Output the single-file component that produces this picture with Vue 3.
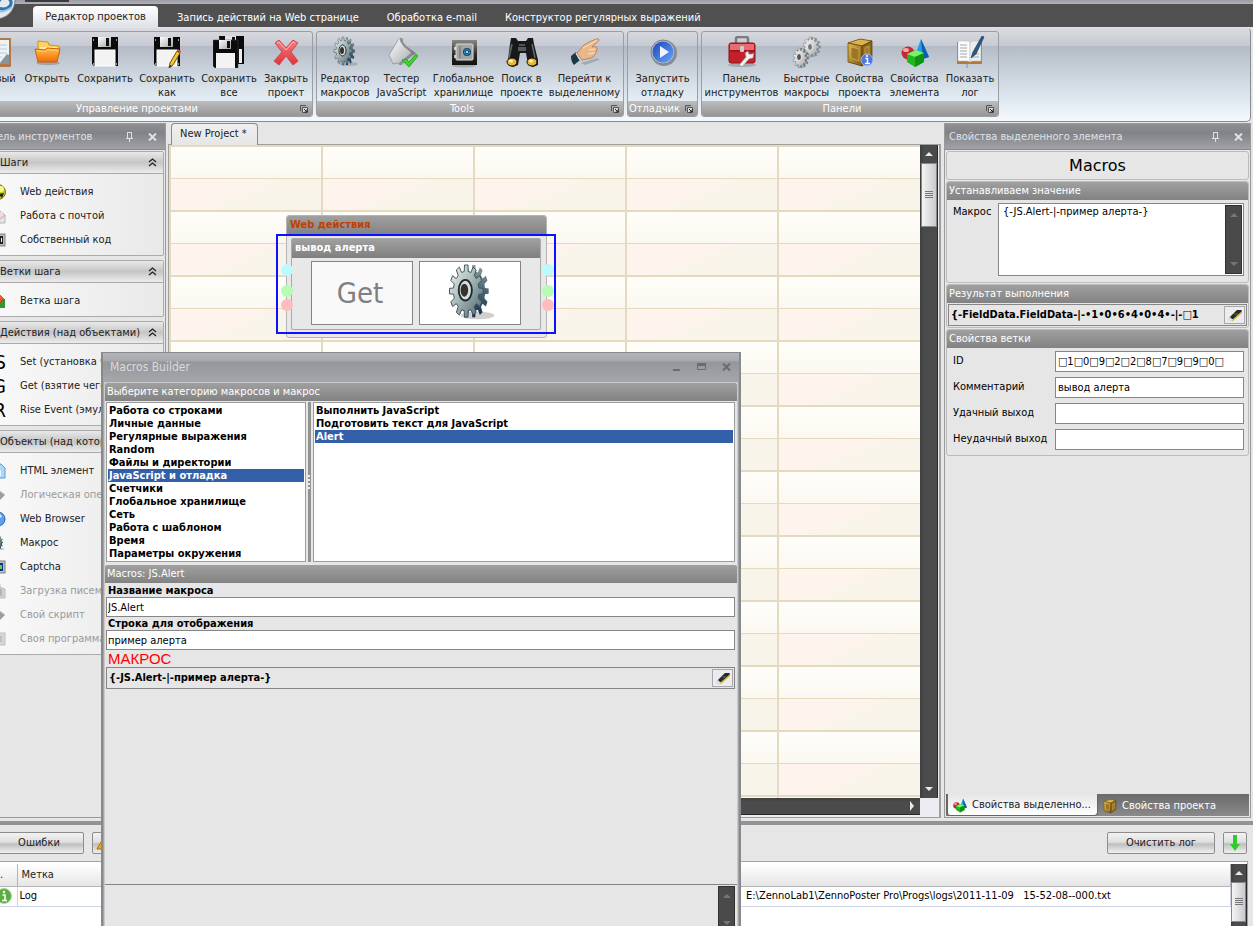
<script setup>
import { ref } from 'vue'

function gear(cx, cy, rx, ry, teeth, depth) {
  const pts = []
  const step = (Math.PI * 2) / teeth
  for (let i = 0; i < teeth; i++) {
    const a = i * step
    const ring = [[-0.3, 1 - depth], [-0.2, 1], [0.2, 1], [0.3, 1 - depth]]
    for (const [o, k] of ring) {
      const t = a + o * step
      pts.push((cx + Math.cos(t) * rx * k).toFixed(2) + ' ' + (cy + Math.sin(t) * ry * k).toFixed(2))
    }
  }
  return 'M' + pts.join('L') + 'Z'
}

const menu = ['Запись действий на Web странице', 'Обработка e-mail', 'Конструктор регулярных выражений']

const groups = [
  { id: 'projects', title: 'Управление проектами', items: [
    { icon: 'new', label: 'Новый' },
    { icon: 'open', label: 'Открыть' },
    { icon: 'save', label: 'Сохранить' },
    { icon: 'saveas', label: 'Сохранить\nкак' },
    { icon: 'saveall', label: 'Сохранить\nвсе' },
    { icon: 'close', label: 'Закрыть\nпроект' },
  ] },
  { id: 'tools', title: 'Tools', items: [
    { icon: 'gear', label: 'Редактор\nмакросов' },
    { icon: 'script', label: 'Тестер\nJavaScript' },
    { icon: 'safe', label: 'Глобальное\nхранилище' },
    { icon: 'find', label: 'Поиск в\nпроекте' },
    { icon: 'hand', label: 'Перейти к\nвыделенному' },
  ] },
  { id: 'debug', title: 'Отладчик', items: [{ icon: 'play', label: 'Запустить\nотладку' }] },
  { id: 'panels', title: 'Панели', items: [
    { icon: 'toolbox', label: 'Панель\nинструментов' },
    { icon: 'gears', label: 'Быстрые\nмакросы' },
    { icon: 'boxinfo', label: 'Свойства\nпроекта' },
    { icon: 'shapes', label: 'Свойства\nэлемента' },
    { icon: 'book', label: 'Показать\nлог' },
  ] },
]

const sections = [
  { title: 'Шаги', items: [
    { icon: 's-web', label: 'Web действия' },
    { icon: 's-mail', label: 'Работа с почтой' },
    { icon: 's-code', label: 'Собственный код' },
  ] },
  { title: 'Ветки шага', items: [{ icon: 's-branch', label: 'Ветка шага' }] },
  { title: 'Действия (над объектами)', items: [
    { letter: 'S', label: 'Set (установка чего-либо)' },
    { letter: 'G', label: 'Get (взятие чего-либо)' },
    { letter: 'R', label: 'Rise Event (эмуляция)' },
  ] },
  { title: 'Объекты (над которыми)', items: [
    { icon: 's-html', label: 'HTML элемент' },
    { icon: 's-logic', label: 'Логическая операция', off: true },
    { icon: 's-globe', label: 'Web Browser' },
    { icon: 'gear', label: 'Макрос' },
    { icon: 's-captcha', label: 'Captcha' },
    { icon: 's-load', label: 'Загрузка писем', off: true },
    { icon: 's-logic', label: 'Свой скрипт', off: true },
    { icon: 's-prog', label: 'Своя программа', off: true },
  ] },
]

const categories = ['Работа со строками', 'Личные данные', 'Регулярные выражения', 'Random', 'Файлы и директории', 'JavaScript и отладка', 'Счетчики', 'Глобальное хранилище', 'Сеть', 'Работа с шаблоном', 'Время', 'Параметры окружения']
const macros = ['Выполнить JavaScript', 'Подготовить текст для JavaScript', 'Alert']
const category = ref('JavaScript и отладка')
const macro = ref('Alert')

const macroText = ref('{-JS.Alert-|-пример алерта-}')
const resultText = ref('{-FieldData.FieldData-|-•1•0•6•4•0•4•-|-□1')
const builderText = ref('{-JS.Alert-|-пример алерта-}')
const macroName = ref('JS.Alert')
const displayText = ref('пример алерта')
const fields = ref([
  { id: 'f-id', label: 'ID', value: '□1□0□9□2□2□8□7□9□9□0□' },
  { id: 'f-comment', label: 'Комментарий', value: 'вывод алерта' },
  { id: 'f-ok', label: 'Удачный выход', value: '' },
  { id: 'f-fail', label: 'Неудачный выход', value: '' },
])
</script>

<template>
  <svg class="defs" aria-hidden="true">
    <defs>
      <linearGradient id="gSteel" x1="0" y1="0" x2="1" y2="1"><stop offset="0" stop-color="#f3f7f6" /><stop offset=".45" stop-color="#a9bab9" /><stop offset="1" stop-color="#4b626e" /></linearGradient>
      <linearGradient id="gDeep" x1="0" y1="0" x2="0" y2="1"><stop offset="0" stop-color="#8a9a98" /><stop offset="1" stop-color="#12324e" /></linearGradient>
      <linearGradient id="gOrange" x1="0" y1="0" x2="0" y2="1"><stop offset="0" stop-color="#ffc04a" /><stop offset="1" stop-color="#f06a05" /></linearGradient>
      <linearGradient id="gRed" x1="0" y1="0" x2="0" y2="1"><stop offset="0" stop-color="#f58080" /><stop offset="1" stop-color="#e0303a" /></linearGradient>
      <linearGradient id="gBlue" x1="0" y1="0" x2="1" y2="1"><stop offset="0" stop-color="#1746b8" /><stop offset="1" stop-color="#6aa4ff" /></linearGradient>
      <linearGradient id="gWood" x1="0" y1="0" x2="1" y2="1"><stop offset="0" stop-color="#e2b94c" /><stop offset="1" stop-color="#7d5712" /></linearGradient>
      <linearGradient id="gPaper" x1="0" y1="0" x2="1" y2="1"><stop offset="0" stop-color="#ffffff" /><stop offset="1" stop-color="#a0a4a8" /></linearGradient>
      <linearGradient id="gSafe" x1="0" y1="0" x2="0" y2="1"><stop offset="0" stop-color="#8c8782" /><stop offset=".6" stop-color="#2a2725" /><stop offset="1" stop-color="#14120f" /></linearGradient>
    </defs>
    <symbol id="new" viewBox="0 0 32 32"><rect x="3" y="2" width="25" height="29" rx="1" fill="#b07848" /><path d="M5 4h21v24H5z" fill="#eef3f6" /><path d="M7 9h17M7 13h17M7 17h17M7 21h12" stroke="#b6cbd6" /><path d="M16 28l8-10 2 1v9z" fill="#8a949a" /></symbol>
    <symbol id="open" viewBox="0 0 32 32"><ellipse cx="17" cy="27" rx="12" ry="2" fill="#777c86" opacity=".5" /><path d="M7 5l10 1 1 3 10 1v8H7z" fill="#fbd168" stroke="#d98f1c" /><path d="M9 11h17l-1 6H9z" fill="#ffe99a" /><path d="M4 13l10 1 2-2 13 1-3 13H7z" fill="url(#gOrange)" stroke="#cf5c06" /><path d="M5.500 14.500l9 1 2-2 11 1" fill="none" stroke="#ffd27a" /></symbol>
    <symbol id="save" viewBox="0 0 32 32"><path d="M3 1h26v29H5l-2-2z" fill="#0b0b0b" /><rect x="9" y="1" width="13" height="10" fill="url(#gPaper)" /><rect x="17" y="2" width="3" height="8" fill="#111" /><rect x="6" y="14" width="20" height="16" fill="#f3f3f3" stroke="#fff" /><path d="M4.500 3v2M27.500 3v2M4.500 27v2M27.500 27v2" stroke="#999" /></symbol>
    <symbol id="saveas" viewBox="0 0 32 32"><use href="#save" width="32" height="32" /><path d="M26 15l3 2-7 12-4 3 1-5z" fill="#f0c929" stroke="#6d5410" /><path d="M26 15l3 2 1-2-3-2z" fill="#e33" /><path d="M18 32l1-3 2 1z" fill="#222" /></symbol>
    <symbol id="saveall" viewBox="0 0 32 32"><path d="M6 0h25v28H8z" fill="#0b0b0b" /><rect x="12" y="0" width="11" height="7" fill="#e4e4e4" /><rect x="19" y="1" width="3" height="5" fill="#111" /><rect x="26" y="13" width="3" height="14" fill="#eee" /><path d="M0 4h25v28H2l-2-2z" fill="#0b0b0b" stroke="#444" stroke-width=".5" /><rect x="6" y="4" width="12" height="9" fill="url(#gPaper)" /><rect x="14" y="5" width="3" height="7" fill="#111" /><rect x="3" y="17" width="19" height="15" fill="#f3f3f3" /></symbol>
    <symbol id="close" viewBox="0 0 32 32"><path d="M5 7l4-3 7 8 7-8 5 3-7 9 7 9-5 4-7-9-7 9-5-4 8-9z" fill="url(#gRed)" stroke="#d2484d" stroke-linejoin="round" /><path d="M7 7l2-1 7 8 7-8 2 1" fill="none" stroke="#ffb9b9" /></symbol>
    <symbol id="gear" viewBox="0 0 32 32"><ellipse cx="20" cy="28" rx="9" ry="2" fill="#777" opacity=".35" /><path :d="gear(18, 15, 8, 14, 12, 0.24)" fill="url(#gDeep)" /><path :d="gear(14, 15, 9, 14, 12, 0.24)" fill="url(#gSteel)" stroke="#3d5058" stroke-width=".5" /><ellipse cx="13.500" cy="14.500" rx="3.500" ry="5.500" fill="#d5e0dc" stroke="#1b2a2f" stroke-width="1" /><ellipse cx="13" cy="14.500" rx="2" ry="3.500" fill="#3a302b" /></symbol>
    <symbol id="script" viewBox="0 0 32 32"><path d="M3 19l9-15 2-2 3 1-1 3 2 3 11 8-14 12-4-2-4 1z" fill="url(#gPaper)" stroke="#888c90" stroke-width=".7" /><path d="M14 2q3 0 3 4l3 4 10 7-2 2-10-8-4-6z" fill="#777b7e" opacity=".75" /><path d="M13 27l13-11 2 2-14 11z" fill="#5c6064" opacity=".5" /><path d="M16 24l4-1 3 3 7-8 2 2-9 11z" fill="#3ed32b" stroke="#159112" stroke-width=".7" /></symbol>
    <symbol id="safe" viewBox="0 0 32 32"><ellipse cx="16" cy="30" rx="12" ry="1.500" fill="#777" opacity=".4" /><rect x="4" y="4" width="25" height="25" fill="url(#gSafe)" /><rect x="8" y="8" width="17" height="16" rx="1" fill="#a3a5a5" stroke="#ddd" /><path d="M12 10v12" stroke="#666" /><path d="M7 11v3M7 19v3" stroke="#eee" stroke-width="1.500" /><circle cx="19" cy="16" r="4" fill="#12486e" /><circle cx="19" cy="16" r="2.500" fill="none" stroke="#4ec2f0" stroke-dasharray="2 1" /><circle cx="19" cy="16" r="1" fill="#fff" /></symbol>
    <symbol id="find" viewBox="0 0 32 32"><path d="M5 2h5l2 3h8l2-3h5l1 6 4 16v5l-5 2-5-2-2-12h-6l-2 12-5 2-5-2v-5L4 8z" fill="#17191b" /><path d="M6 8l-3 14M26 8l3 14M13 9h6" stroke="#62686c" stroke-width="1.500" /><path d="M13 11v4M15 11v4M17 11v4M19 11v4" stroke="#bbb" stroke-width=".8" /><ellipse cx="6" cy="26" rx="5" ry="4" fill="#e9b637" stroke="#111" /><ellipse cx="26" cy="26" rx="5" ry="4" fill="#e9b637" stroke="#111" /><ellipse cx="5" cy="25" rx="2" ry="1.500" fill="#fff1a2" /><ellipse cx="25" cy="25" rx="2" ry="1.500" fill="#fff1a2" /></symbol>
    <symbol id="hand" viewBox="0 0 32 32"><path d="M12 27l17-5 1 2-14 5z" fill="#777" opacity=".4" /><path d="M8 17l7-8 5-3 7-3q3-1 3 1 0 1-5 5l-2 2q5-1 5 1 1 2-1 3 1 2-1 3 0 3-4 4l-9 2z" fill="#eab78c" stroke="#ad6d3e" stroke-width=".7" /><path d="M14 12l9-5 5-3M20 14l6-1M19 18l7-1" stroke="#fbe2c4" fill="none" /><path d="M2 20l5-4 4 8-6 5q-3-3-3-9z" fill="#1f3645" /><path d="M7 17l4 7" stroke="#d9e1e6" stroke-width="1.500" /></symbol>
    <symbol id="play" viewBox="0 0 32 32"><circle cx="17" cy="17" r="13" fill="#888e96" /><circle cx="16" cy="16" r="12" fill="#b5bac1" stroke="#7c828b" /><circle cx="16" cy="16" r="10.500" fill="url(#gBlue)" /><path d="M13 10l9 6-9 6z" fill="#eef4ff" /></symbol>
    <symbol id="toolbox" viewBox="0 0 32 32"><ellipse cx="16" cy="29" rx="14" ry="2" fill="#777" opacity=".4" /><path d="M10 8V3q0-2 2-2h8q2 0 2 2v5" fill="none" stroke="#777d80" stroke-width="2.500" /><rect x="3" y="7" width="26" height="20" rx="2" fill="#c3202b" stroke="#8d1119" /><path d="M4 8h24v6H4z" fill="#e96a70" /><path d="M4 15h24" stroke="#7d0f16" /><rect x="14" y="10" width="4" height="6" rx="1" fill="#ccc" /><path d="M13 29l7-8-1-4 3-2 1 3h3l2-1-1 5-4 1-7 8z" fill="#eef0f2" stroke="#888" stroke-width=".7" /></symbol>
    <symbol id="gears" viewBox="0 0 32 32"><path :d="gear(22, 11, 8, 10, 11, 0.25)" fill="#87918f" /><path :d="gear(20, 11, 8, 10, 11, 0.25)" fill="url(#gPaper)" stroke="#717c7c" stroke-width=".5" /><ellipse cx="19" cy="11" rx="2.500" ry="3.500" fill="#777" stroke="#eee" /><path :d="gear(11, 22, 7, 10, 11, 0.25)" fill="#6f7b7c" /><path :d="gear(9, 22, 7, 10, 11, 0.25)" fill="url(#gPaper)" stroke="#717c7c" stroke-width=".5" /><ellipse cx="8" cy="21" rx="2.500" ry="3.500" fill="#5c5350" stroke="#eee" /></symbol>
    <symbol id="box" viewBox="0 0 32 32"><path d="M4 7l12-4 12 2v18l-10 7-14-4z" fill="#76561a" /><path d="M4 7l12-4 12 2-10 5z" fill="#dcb44b" stroke="#5e4310" stroke-width=".7" /><path d="M4 7l14 3v20L4 26z" fill="url(#gWood)" stroke="#5e4310" stroke-width=".7" /><path d="M18 10l10-5v18l-10 7z" fill="#8d671b" stroke="#4e370b" stroke-width=".7" /><path d="M7 11l8 2v12l-8-3zM21 12l4-2v11l-4 3z" fill="#9c7728" stroke="#e0bd5c" stroke-width=".6" /></symbol>
    <symbol id="boxinfo" viewBox="0 0 32 32"><use href="#box" width="32" height="32" /><circle cx="23" cy="24" r="6" fill="#4e78da" stroke="#b9cbff" stroke-width=".8" /><path d="M21.500 22.500h2V27M21 27.500h5" stroke="#fff" stroke-width="1.400" fill="none" /><circle cx="23" cy="20" r="1" fill="#fff" /></symbol>
    <symbol id="shapes" viewBox="0 0 32 32"><path d="M22 3l8 18-10 3-4-4z" fill="#249be6" /><path d="M22 3l8 18-6 2z" fill="#0a5fae" /><circle cx="9" cy="17" r="6.500" fill="#c62832" /><ellipse cx="7" cy="14" rx="3" ry="2" fill="#f5a3a5" /><path d="M8 18l9-4 8 3v9l-9 5-8-5z" fill="#22b51f" /><path d="M8 18l9-4 8 3-9 4z" fill="#7bf06c" /><path d="M16 21l9-4v9l-9 5z" fill="#0f9412" /></symbol>
    <symbol id="book" viewBox="0 0 32 32"><path d="M3 6h25v22H3z" fill="#b7783c" /><path d="M4 5h9q3 0 3 2v19q-1-1-3-1H4z" fill="#fafbfb" stroke="#bbb" stroke-width=".5" /><path d="M16 7q1-2 3-2h8v20h-8q-2 0-3 1z" fill="#e9eef0" stroke="#bbb" stroke-width=".5" /><path d="M6 9h7M6 12h7M6 15h7M6 18h7M6 21h7M18 18h7M18 21h7" stroke="#a5a9ab" /><path d="M28 0l2 1-8 17-5 4 2-6z" fill="#2a5c86" stroke="#16344f" stroke-width=".6" /><path d="M15 27q-4 2-1 5" fill="none" stroke="#6a94ad" /></symbol>
    <symbol id="s-web" viewBox="0 0 16 16"><circle cx="8" cy="8" r="7.500" fill="#c6cf1c" stroke="#6c7312" /><path d="M8 10l6-1-2 5z" fill="#222" /><circle cx="11" cy="5" r="3" fill="#f4f78a" /></symbol>
    <symbol id="s-mail" viewBox="0 0 16 16"><path d="M2 7l7-5 6 5v8H2z" fill="#e5e5e7" stroke="#b5b5b8" /><path d="M4 4h9v5l-4 3-5-3z" fill="#f5d9d5" /><path d="M2 8l7 4 6-5" fill="none" stroke="#aaa" /></symbol>
    <symbol id="s-code" viewBox="0 0 16 16"><rect x="1" y="2" width="14" height="12" fill="#b9bec2" stroke="#7b8288" /><rect x="3" y="4" width="10" height="8" fill="#1e2328" /><path d="M9 5v6M11.500 6v4" stroke="#fff" /></symbol>
    <symbol id="s-branch" viewBox="0 0 16 16"><path d="M2 6h13v9H2z" fill="#2f9a35" /><path d="M9 1l6 6h-3l-4 6-3-3 3-3H4z" fill="#f05b26" stroke="#b23310" stroke-width=".6" /></symbol>
    <symbol id="s-html" viewBox="0 0 16 16"><path d="M3 1h8l4 4v10H3z" fill="#a9d8fb" stroke="#5ba0d4" /><path d="M5 7h6v6H5z" fill="#eef8ff" /></symbol>
    <symbol id="s-logic" viewBox="0 0 16 16"><path d="M2 4h8l5 4-5 5H2z" fill="#777" stroke="#b9b9b9" /></symbol>
    <symbol id="s-globe" viewBox="0 0 16 16"><circle cx="8" cy="8" r="7" fill="#5da1ea" stroke="#2b62b0" /><path d="M3 5q5-5 9 0-2 3-5 2t-4-2z" fill="#d7ecff" /></symbol>
    <symbol id="s-captcha" viewBox="0 0 16 16"><rect x="1" y="2" width="14" height="12" fill="#b6c4d0" stroke="#78838c" /><rect x="3" y="4" width="10" height="8" fill="#1c2c80" /><rect x="9" y="6" width="3" height="4" fill="#63d14a" /></symbol>
    <symbol id="s-load" viewBox="0 0 16 16"><path d="M3 1h7v3l5 2v9H3z" fill="#c2c2c2" stroke="#a9a9a9" /><path d="M10 6h2v7h-2z" fill="#999" /></symbol>
    <symbol id="s-prog" viewBox="0 0 16 16"><rect x="1" y="2" width="14" height="12" fill="#c9c9c9" stroke="#aaa" /><path d="M5 5v6M8 5v6M11 5v6" stroke="#888" /></symbol>
    <symbol id="pin" viewBox="0 0 9 10"><path d="M2 0.500h5M2.500 0v6M6.500 0v6M1 6.500h7M4.500 6v4" fill="none" stroke="currentColor" /></symbol>
    <symbol id="cross" viewBox="0 0 9 8"><path d="M1 0.500l7 7M8 0.500l-7 7" stroke="currentColor" stroke-width="2" /></symbol>
    <symbol id="up" viewBox="0 0 10 10"><path d="M1 7l4-4 4 4z" fill="currentColor" /></symbol>
    <symbol id="down" viewBox="0 0 10 10"><path d="M1 3l4 4 4-4z" fill="currentColor" /></symbol>
    <symbol id="right" viewBox="0 0 10 10"><path d="M3 0l4 5-4 5z" fill="currentColor" /></symbol>
    <symbol id="chev" viewBox="0 0 9 9"><path d="M1 4l3.500-3L8 4M1 8l3.500-3L8 8" fill="none" stroke="currentColor" stroke-width="1.300" /></symbol>
    <symbol id="launch" viewBox="0 0 8 8"><path d="M0.500 6V0.500H6" fill="none" stroke="#555" /><path d="M2.500 7.500V2.500h5v5z" fill="#ddd" stroke="#555" /><path d="M4 4l3 3M7 4.500V7H4.500" stroke="#222" fill="none" /></symbol>
    <symbol id="marker" viewBox="0 0 16 13"><path d="M1 10l9-9h5v3l-9 8H2z" fill="#d9b92c" /><path d="M2 9l8-8h4l1 1-9 8H3z" fill="#1f2b30" /><path d="M1 9l2-1 3 3-2 1H1z" fill="#d8e4d8" /><path d="M7 5l4 0" stroke="#5a6a66" /></symbol>
  </svg>

  <div class="shell">
    <div class="titlebar"></div>
    <header class="tabs">
      <svg class="orb" viewBox="0 0 40 46" aria-hidden="true"><circle cx="20" cy="25" r="19" fill="#e6e9eb" stroke="#777b80" /><path d="M18 31q10 6 16 0 3-5-2-8-6-2-9 3" fill="none" stroke="#2b75b8" stroke-width="3" /><path d="M16 34q9 6 20-2" fill="none" stroke="#8ec3ea" stroke-width="2" /></svg>
      <button class="tab active">Редактор проектов</button>
      <button v-for="m in menu" :key="m" class="tab">{{ m }}</button>
    </header>

    <section class="ribbon">
      <div v-for="g in groups" :key="g.id" class="group">
        <div class="buttons" :class="g.id">
          <button v-for="b in g.items" :key="b.icon" class="big"><svg class="i32"><use :href="'#' + b.icon" /></svg><span>{{ b.label }}</span></button>
        </div>
        <div class="caption"><span>{{ g.title }}</span><button class="launch" :aria-label="g.title"><svg class="i8"><use href="#launch" /></svg></button></div>
      </div>
    </section>

    <main class="work">
      <aside class="left panel">
        <div class="phead"><span>Панель инструментов</span><button aria-label="Закрепить"><svg class="ipin"><use href="#pin" /></svg></button><button aria-label="Закрыть"><svg class="icross"><use href="#cross" /></svg></button></div>
        <section v-for="s in sections" :key="s.title" class="acc">
          <h3>{{ s.title }}<svg class="i9"><use href="#chev" /></svg></h3>
          <ul>
            <li v-for="it in s.items" :key="it.label" :class="{ off: it.off }">
              <span v-if="it.letter" class="letter">{{ it.letter }}</span>
              <svg v-else class="i16"><use :href="'#' + it.icon" /></svg>
              <span>{{ it.label }}</span>
            </li>
          </ul>
        </section>
      </aside>

      <section class="doc">
        <div class="doctabs"><button class="doctab">New Project *</button></div>
        <div class="frame">
          <div class="canvas">
            <div class="node">
              <div class="nhead">Web действия</div>
              <div class="step">
                <div class="shead">вывод алерта</div>
                <div class="cells">
                  <div class="cell get">Get</div>
                  <div class="cell pic"><svg class="i64"><use href="#gear" /></svg></div>
                </div>
              </div>
              <div class="selection">
                <i class="port l cyan"></i><i class="port l green"></i><i class="port l pink"></i>
                <i class="port r cyan"></i><i class="port r green"></i><i class="port r pink"></i>
              </div>
            </div>
          </div>
          <div class="vbar"><svg class="i10"><use href="#up" /></svg><div class="thumb"><i></i></div><svg class="i10 end"><use href="#down" /></svg></div>
          <div class="hbar"><svg class="i10"><use href="#right" /></svg></div>
        </div>
      </section>

      <aside class="right panel">
        <div class="phead"><span>Свойства выделенного элемента</span><button aria-label="Закрепить"><svg class="ipin"><use href="#pin" /></svg></button><button aria-label="Закрыть"><svg class="icross"><use href="#cross" /></svg></button></div>
        <h2>Macros</h2>
        <section class="box">
          <h3>Устанавливаем значение</h3>
          <div class="macro">
            <label for="macro">Макрос</label>
            <div class="area"><textarea id="macro" v-model="macroText"></textarea><div class="mini"><svg class="i10"><use href="#up" /></svg><svg class="i10"><use href="#down" /></svg></div></div>
          </div>
        </section>
        <section class="box">
          <h3 id="res">Результат выполнения</h3>
          <div class="pick"><input v-model="resultText" aria-labelledby="res" /><button aria-label="Изменить"><svg class="imark"><use href="#marker" /></svg></button></div>
        </section>
        <section class="box">
          <h3>Свойства ветки</h3>
          <div class="fields">
            <template v-for="f in fields" :key="f.id"><label :for="f.id">{{ f.label }}</label><input :id="f.id" v-model="f.value" /></template>
          </div>
        </section>
        <nav class="ptabs">
          <button class="ptab on"><svg class="i16"><use href="#shapes" /></svg>Свойства выделенно...</button>
          <button class="ptab"><svg class="i16"><use href="#box" /></svg>Свойства проекта</button>
        </nav>
      </aside>
    </main>

    <section class="log">
      <div class="logbar">
        <button class="btn err">Ошибки</button>
        <button class="btn sq" aria-label="Предупреждения"><svg class="i16" viewBox="0 0 16 16"><path d="M8 2l7 12H1z" fill="#f7a81c" stroke="#b36c07" /><path d="M8 6v4M8 11v2" stroke="#222" /></svg></button>
        <span class="grow"></span>
        <button class="btn clear">Очистить лог</button>
        <button class="btn sq" aria-label="Прокрутить вниз"><svg class="i16" viewBox="0 0 16 16"><path d="M6 0h4v9h3l-5 7-5-7h3z" fill="#2fcb2c" /></svg></button>
      </div>
      <div class="grid">
        <table>
          <colgroup><col class="c1" /><col class="c2" /><col /></colgroup>
          <thead><tr><th class="dot">.</th><th>Метка</th><th></th></tr></thead>
          <tbody><tr><td class="ico"><svg class="i16" viewBox="0 0 16 16"><circle cx="8" cy="8" r="7.500" fill="#59b040" stroke="#a9d79a" /><path d="M6.500 7H9v5M6 12.500h5" stroke="#fff" stroke-width="1.500" fill="none" /><circle cx="8" cy="4" r="1.200" fill="#fff" /></svg></td><td>Log</td><td class="path">E:\ZennoLab1\ZennoPoster Pro\Progs\logs\2011-11-09&nbsp;&nbsp; 15-52-08--000.txt</td></tr></tbody>
        </table>
        <div class="vbar"><svg class="i10"><use href="#up" /></svg><div class="thumb tall"><i></i></div></div>
      </div>
    </section>

    <div class="dialog" role="dialog" aria-labelledby="dlg">
      <div class="dhead">
        <span id="dlg">Macros Builder</span>
        <button aria-label="Свернуть"><svg class="iwin" viewBox="0 0 9 8"><path d="M1 6h7v2H1z" fill="currentColor" /></svg></button>
        <button aria-label="Развернуть"><svg class="iwin" viewBox="0 0 9 8"><path d="M0.500 0.500h8v6h-8z" fill="none" stroke="currentColor" /><path d="M0 0h9v3H0z" fill="currentColor" /></svg></button>
        <button aria-label="Закрыть"><svg class="iwin"><use href="#cross" /></svg></button>
      </div>
      <div class="dbody">
        <h3>Выберите категорию макросов и макрос</h3>
        <div class="lists">
          <ul class="list cats" role="listbox" aria-label="Категории"><li v-for="c in categories" :key="c" role="option" :aria-selected="c === category" @click="category = c">{{ c }}</li></ul>
          <div class="split"><i></i></div>
          <ul class="list" role="listbox" aria-label="Макросы"><li v-for="m in macros" :key="m" role="option" :aria-selected="m === macro" @click="macro = m">{{ m }}</li></ul>
        </div>
        <h3>Macros: JS.Alert</h3>
        <div class="form">
          <label for="mname">Название макроса</label>
          <input id="mname" v-model="macroName" />
          <label for="mtext">Строка для отображения</label>
          <input id="mtext" v-model="displayText" />
          <label class="red" for="mres">МАКРОС</label>
          <div class="pick"><input id="mres" v-model="builderText" /><button aria-label="Изменить"><svg class="imark"><use href="#marker" /></svg></button></div>
        </div>
        <div class="dfoot"><div class="mini"><svg class="i10"><use href="#up" /></svg><svg class="i10"><use href="#down" /></svg></div></div>
      </div>
    </div>
  </div>
</template>

<style>
html, body { margin: 0; background: #e6e6e6; overflow: hidden; }
</style>

<style scoped>
.defs { position: absolute; width: 0; height: 0; }
.shell { position: relative; display: flex; flex-direction: column; height: 100vh; margin-left: -24px; overflow: hidden; background: #e6e6e6; font: 11px/14px "DejaVu Sans Condensed", "DejaVu Sans", "Noto Sans", sans-serif; color: #222; }
.shell * { box-sizing: border-box; }
button { border: 0; padding: 0; margin: 0; background: none; font: inherit; color: inherit; white-space: nowrap; }
input, textarea { font: inherit; color: #000; border: 1px solid #868686; background: #fff; border-radius: 0; margin: 0; outline: 0; min-width: 0; }
h2, h3, ul { margin: 0; padding: 0; font: inherit; list-style: none; }
svg { display: block; flex: none; }
.i32 { width: 32px; height: 32px; }
.i16 { width: 16px; height: 16px; }
.i10 { width: 10px; height: 10px; }
.i9 { width: 9px; height: 9px; }
.i8 { width: 8px; height: 8px; }
.i64 { width: 62px; height: 60px; }
.ipin { width: 9px; height: 10px; }
.icross, .iwin { width: 9px; height: 8px; }
.imark { width: 16px; height: 13px; }

.titlebar { flex: none; height: 4px; background: linear-gradient(#3c3c3e, #3c3c3e) 49px 0 / 44px 2px no-repeat, linear-gradient(#9b9ca6, #b2b2bb); }
.tabs { position: relative; flex: none; display: flex; align-items: flex-end; height: 23px; padding-left: 57px; background: #505050; color: #fff; }
.orb { position: absolute; left: 0; top: -29px; width: 40px; height: 46px; }
.tab { height: 20px; padding: 1px 14px 0; }
.tab.active { height: 21px; width: 125px; padding: 0; margin-right: 5px; border-radius: 4px 4px 0 0; background: linear-gradient(#fff, #dfe2e6); color: #222; }

.ribbon { flex: none; display: flex; gap: 3px; height: 95px; padding: 3px 2px 4px 1px; margin-right: 2px; border: 1px solid #898c90; border-top-color: #dfe3e8; border-left: 0; border-radius: 0 5px 5px 0; background: linear-gradient(#dadce1, #c4c8d0 18px, #b4bbc6 18px, #dce5ed 68px, #f4f9fd); }
.group { display: flex; flex-direction: column; border: 1px solid #9a9da3; border-radius: 3px; overflow: hidden; background: linear-gradient(#d6d8de, #c6cad2 14px, #b4bbc6 14px, #e6eff6 70px); }
.buttons { flex: 1; display: grid; }
.projects { grid-template-columns: 42px 54px 62px 62px 62px 52px; }
.tools { grid-template-columns: 56px 57px 67px 49px 77px; }
.debug { grid-template-columns: 69px; }
.panels { grid-template-columns: 79px 51px 55px 55px 56px; }
.big { display: flex; flex-direction: column; align-items: center; gap: 4px; padding-top: 4px; min-width: 0; }
.big span { white-space: pre; text-align: center; }
.caption { display: flex; align-items: center; height: 15px; background: linear-gradient(#bcbcbc, #969696); color: #fff; }
.caption span { flex: 1; text-align: center; }
.launch { padding: 0 4px; }

.work { flex: 1; display: flex; gap: 2px; min-height: 0; padding: 1px 2px 3px 0; }
.panel { display: flex; flex-direction: column; flex: none; border: 1px solid #9a9a9c; background: #e6e6e6; }
.phead { display: flex; align-items: center; flex: none; height: 26px; padding: 1px 0 0 4px; background: linear-gradient(#8d8f93, #818387 9px, #a0a2a5); color: #dfe1e8; border-bottom: 1px solid #87898c; }
.phead span { flex: 1; }
.phead button { width: 23px; display: flex; justify-content: center; }
.left { width: 190px; }
.left .phead { padding-left: 0; }
.left .phead button:last-child { margin-right: 1px; }
.acc { margin: 1px 1px 3px 0; border: 1px solid #ababab; border-radius: 2px; background: linear-gradient(90deg, #fafafa, #e9e9e9); }
.acc h3 { display: flex; align-items: center; justify-content: space-between; height: 22px; padding: 0 6px 0 22px; border-bottom: 1px solid #a9a9a9; background: linear-gradient(#e9e9e9, #c6c6c6 50%, #ececec); white-space: nowrap; }
.acc ul { padding: 6px 0 3px 12px; }
.acc li { display: flex; align-items: center; gap: 14px; height: 24px; white-space: nowrap; }
.off { color: #9a9a9a; }
.off svg { opacity: .7; }
.letter { width: 16px; text-align: right; font-size: 20px; color: #000; }

.doc { flex: 1; display: flex; flex-direction: column; min-width: 0; }
.doctabs { flex: none; display: flex; height: 21px; padding-left: 3px; }
.doctab { width: 87px; height: 22px; position: relative; border: 1px solid #8b8b8b; border-bottom: 0; border-radius: 4px 4px 0 0; background: linear-gradient(#efefef, #e6e6e6); text-align: left; padding: 0 0 2px 8px; }
.frame { flex: 1; display: grid; grid-template-columns: 1fr 18px; grid-template-rows: 1fr 17px; padding: 0 1px 2px 0; border: 1px solid #9f9f9f; border-right-width: 2px; background: #ececf2; min-height: 0; }
.canvas { position: relative; overflow: hidden; background:
  linear-gradient(90deg, #e3dabf 2px, transparent 2px) 0 0 / 152px 65px,
  linear-gradient(#e3dabf 2px, transparent 2px, transparent 33px, #e3dabf 33px, #e3dabf 34px, transparent 34px) 0 0 / 152px 65px,
  linear-gradient(#fffefa, #fbf8f1 33px, transparent 33px) 0 0 / 152px 65px,
  linear-gradient(155deg, #fef4ed 55%, #f8f4e9 68%) 0 0 / 152px 65px;
}
.vbar { display: flex; flex-direction: column; align-items: center; padding: 4px 0; background: linear-gradient(90deg, #3c3e41, #4b4b4b 4px); border-right: 1px solid #26282c; color: #e9e9e9; }
.vbar .end { margin-top: auto; }
.thumb { display: flex; align-items: center; justify-content: center; width: 16px; height: 64px; margin-top: 4px; background: linear-gradient(90deg, #f4f4f4, #c9cacd); border: 1px solid #888; }
.thumb i { width: 8px; height: 8px; background: repeating-linear-gradient(#777 0 1px, transparent 1px 2px); }
.grid .vbar { width: 16px; }
.thumb.tall { width: 15px; height: 60px; }
.hbar { display: flex; align-items: center; justify-content: flex-end; padding-right: 3px; background: linear-gradient(#3c3e41, #4b4b4b 4px); border-bottom: 1px solid #26282c; color: #e9e9e9; }

.node { position: absolute; left: 117px; top: 70px; width: 261px; height: 123px; border: 1px solid #b5b5b8; border-radius: 3px; background: #e8e8e9; }
.nhead { height: 19px; padding: 2px 3px; border-radius: 2px 2px 0 0; background: linear-gradient(#a0a0a0, #828282); color: #c04000; font-weight: bold; }
.step { margin: 3px 5px 0 4px; height: 92px; border: 1px solid #aaa; border-radius: 2px; background: #e8e8e9; }
.shead { height: 19px; padding: 2px 3px; background: linear-gradient(#a0a0a0, #7f7f7f); color: #fff; font-weight: bold; }
.cells { display: flex; gap: 6px; justify-content: center; margin-top: 3px; }
.cell { display: flex; align-items: center; justify-content: center; width: 102px; height: 64px; border: 1px solid #858585; background: #fff; }
.get { padding-right: 4px; background: #f9f9f9; color: #808080; font-size: 29px; }
.selection { position: absolute; left: -11px; top: 18px; width: 280px; height: 100px; border: 2px solid #0b12ff; }
.port { position: absolute; width: 12px; height: 12px; border-radius: 6px; }
.port.l { left: 3px; }
.port.r { right: 0; }
.cyan { top: 28px; background: #bdfaff; }
.green { top: 49px; background: #b7fbb7; }
.pink { top: 63px; background: #ffbcbc; }

.right { width: 307px; margin-left: 1px; }
.right h2 { flex: none; margin: 1px 1px; height: 29px; border: 1px solid #bbb; border-radius: 3px; text-align: center; font: 16px/28px "DejaVu Sans", sans-serif; color: #000; }
.box { margin: 0 1px 1px; border: 1px solid #bbb; border-radius: 3px; }
.box h3, .dbody h3 { height: 18px; padding: 2px; border-radius: 2px 2px 0 0; background: linear-gradient(#a0a0a0, #828282); color: #fff; }
.macro { display: flex; height: 82px; padding: 3px 4px 6px 6px; color: #000; }
.macro label { width: 45px; padding-top: 2px; }
.area { flex: 1; display: flex; padding: 1px; border: 1px solid #868686; background: #fff; }
.area textarea { flex: 1; padding: 0 3px; border: 0; resize: none; overflow: hidden; white-space: pre; }
.mini { display: flex; flex-direction: column; justify-content: space-between; align-items: center; width: 17px; padding: 4px 0; background: #4a4a4a; border: 1px solid #2f3134; color: #757575; }
.pick { display: flex; height: 22px; margin: 1px; padding: 1px; border: 1px solid #868686; }
.pick input { flex: 1; border: 0; padding: 0 1px; background: transparent; font-weight: bold; }
.pick button { width: 21px; border: 1px solid #a6a8ae; background: #ebebf0; display: flex; align-items: center; justify-content: center; }
.fields { display: grid; grid-template-columns: 102px 1fr; row-gap: 5px; padding: 3px 4px 5px 6px; color: #000; }
.fields label { line-height: 20px; }
.fields input { height: 21px; padding: 0 2px; }
.ptabs { display: flex; height: 22px; margin: auto 1px 1px 1px; background: linear-gradient(#6b6b6b, #8a8a8a); }
.ptab { display: flex; align-items: center; gap: 4px; padding: 1px 4px 0; color: #fff; }
.ptab.on { width: 152px; background: linear-gradient(#e6e6e6, #fff); color: #222; border: 1px solid #666; border-top: 0; border-left-width: 2px; border-radius: 0 0 4px 4px; }

.log { flex: none; height: 105px; border-top: 4px solid #919492; }
.logbar { display: flex; align-items: center; gap: 8px; height: 36px; padding: 0 6px 0 14px; }
.grow { flex: 1; }
.btn { height: 22px; border: 1px solid #8d8d8d; border-radius: 2px; background: linear-gradient(#f2f2f2, #e0e0e0 45%, #bfbfbf 55%, #f0f0f0); }
.err { width: 94px; padding-left: 4px; }
.clear { width: 108px; }
.sq { width: 24px; display: flex; align-items: center; justify-content: center; }
.grid { display: flex; height: 65px; margin-right: 5px; padding-top: 2px; border: 1px solid #a2a2a2; border-left: 0; border-bottom: 0; background: #fff; }
.grid table { flex: 1; align-self: flex-start; table-layout: fixed; border-collapse: collapse; }
.c1 { width: 41px; }
.c2 { width: 727px; }
th { height: 22px; padding: 0 4px; border-bottom: 1px solid #b5b5b5; border-right: 1px solid #b5b5b5; background: linear-gradient(#fff, #e5e5e5); font-weight: normal; text-align: left; }
td { height: 20px; padding: 0 2px; border-bottom: 1px solid #ccd6e6; border-right: 1px solid #ccd6e6; color: #000; }
th:nth-child(2), td:nth-child(2) { border-right: 0; }
.dot { padding-left: 24px; }
.ico { padding-left: 20px; }
.path { white-space: nowrap; }

.dialog { position: absolute; left: 125px; top: 352px; bottom: -10px; width: 640px; display: flex; flex-direction: column; border: 1px solid #88898c; border-width: 1px 2px; background: #a3a5a8; }
.dhead { flex: none; display: flex; align-items: center; height: 29px; padding: 0 5px 2px 7px; background: linear-gradient(#b3b5bb, #a5a8ad 8px, #949698 9px, #a5a7ac); color: #d9dadd; font-size: 12px; }
.dhead span { flex: 1; }
.dhead button { width: 25px; display: flex; justify-content: center; color: #696b6f; }
.dhead button:last-child { width: 15px; margin-left: 5px; }
.dbody { flex: 1; display: flex; flex-direction: column; margin: 0 1px; border: 1px solid #c9c9c9; background: #e6e6e6; }
.lists { display: flex; gap: 2px; height: 161px; padding: 1px 2px 0 1px; margin-bottom: 3px; }
.list { flex: 1; border: 1px solid #9c9c9c; padding: 1px; background: #fff; color: #000; font-weight: bold; line-height: 13px; white-space: nowrap; }
.cats { flex: none; width: 200px; }
.list li { height: 13px; padding: 0 1px; }
.list li[aria-selected="true"] { background: #335fa8; color: #fff; }
.split { width: 3px; display: flex; align-items: center; background: #929292; }
.split i { width: 2px; height: 14px; background: repeating-linear-gradient(#eee 0 2px, transparent 2px 4px); }
.form { display: flex; flex-direction: column; padding: 1px 2px 0 1px; color: #000; }
.form > label { height: 13px; line-height: 14px; padding: 0 2px; font-weight: bold; }
.form > input { height: 20px; padding: 0 1px; }
.form > label.red { height: 17px; color: #f00; font: 15px/18px "Liberation Sans", sans-serif; }
.form .pick { margin: 0; }
.dfoot { display: flex; justify-content: flex-end; height: 50px; margin-top: auto; padding: 1px 2px; border-top: 1px solid #858585; }
</style>
